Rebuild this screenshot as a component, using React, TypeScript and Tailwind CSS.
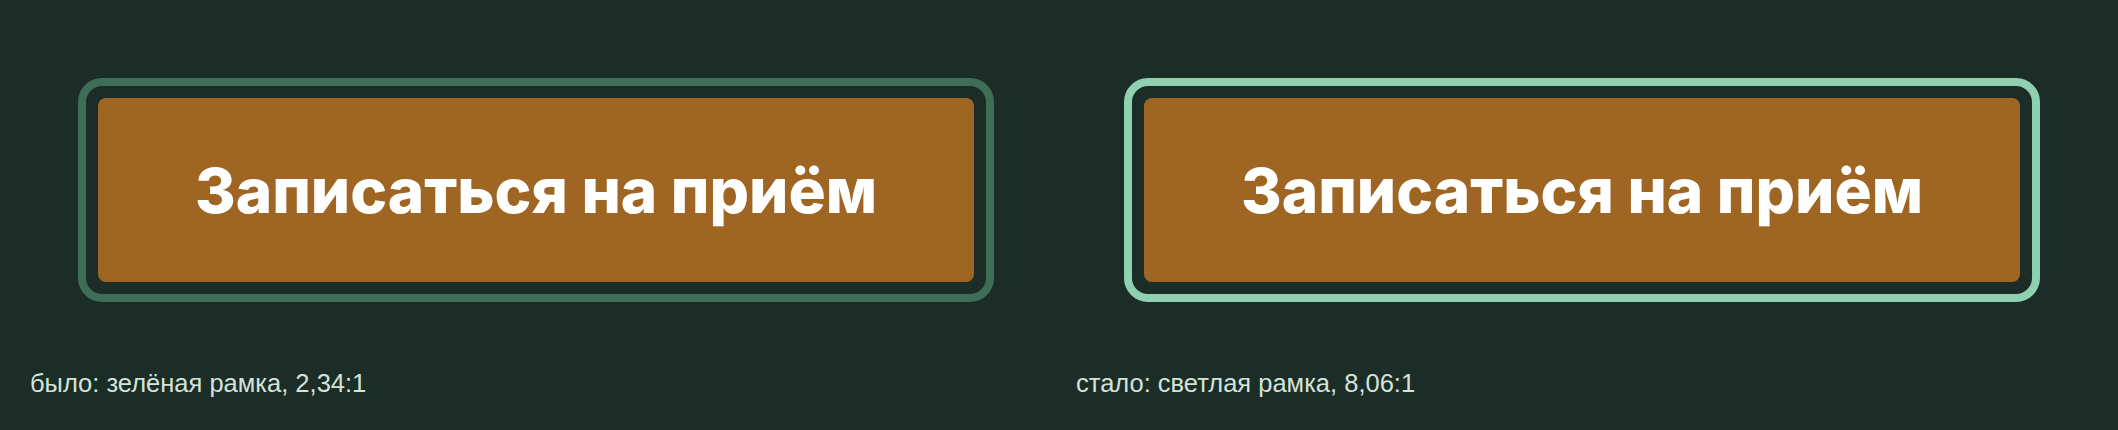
import React from 'react';

type Variant = {
  caption: string;
  ring: string;
};

const variants: Variant[] = [
  { caption: 'было: зелёная рамка, 2,34:1', ring: 'border-[#3f6e58]' },
  { caption: 'стало: светлая рамка, 8,06:1', ring: 'border-[#8fd0b2]' },
];

const FocusSample: React.FC<Variant> = ({ caption, ring }) => (
  <div className="flex flex-col">
    {/* Focus ring around the CTA */}
    <div className="pl-[48px] pt-[48px]">
      <div className={`w-[916px] rounded-[24px] border-[8px] p-[12px] ${ring}`}>
        <button
          type="button"
          className="flex h-[184px] w-full items-center justify-center rounded-[8px] bg-[#9f6522] text-[62px] font-extrabold text-white"
          style={{ fontFamily: 'Inter, "Noto Sans", sans-serif' }}
        >
          Записаться на приём
        </button>
      </div>
    </div>
    <p
      className="mt-[66px] text-[25.5px] leading-[30px] text-[#d3e3da]"
      style={{ fontFamily: '"Liberation Sans", Arial, sans-serif' }}
    >
      {caption}
    </p>
  </div>
);

export default function App() {
  return (
    <div className="h-[430px] w-[2118px] bg-[#1c2d28] pt-[30px]">
      <div className="grid grid-cols-2 gap-[34px] px-[30px]">
        {variants.map((v) => (
          <FocusSample key={v.caption} {...v} />
        ))}
      </div>
    </div>
  );
}
